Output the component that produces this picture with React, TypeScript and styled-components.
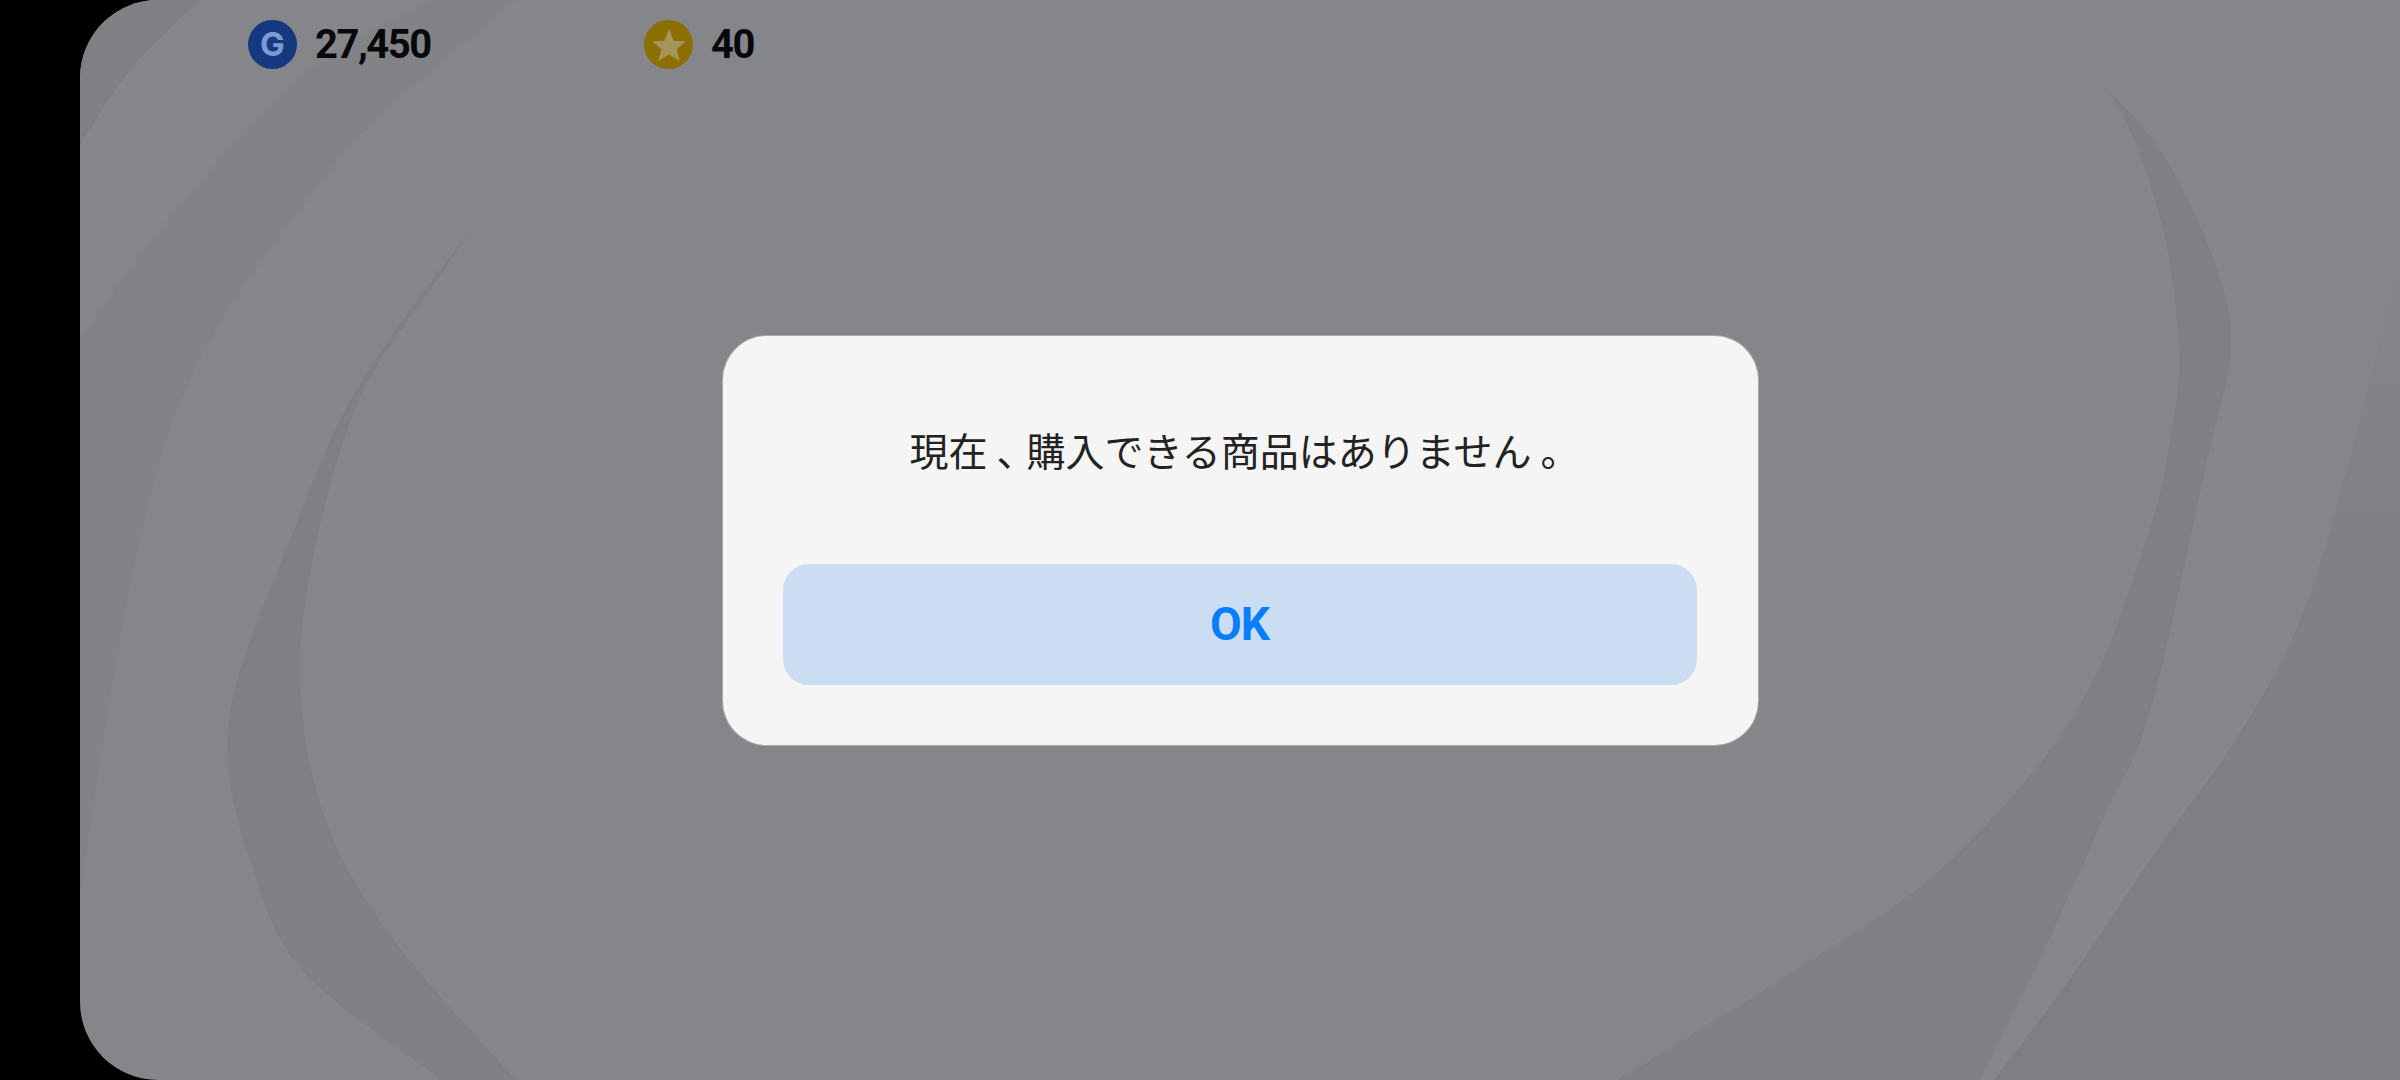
import React from "react";
import styled, { createGlobalStyle } from "styled-components";

const GlobalStyle = createGlobalStyle`
  html, body {
    margin: 0;
    padding: 0;
    width: 2400px;
    height: 1080px;
    overflow: hidden;
    background: #000000;
  }
`;

const Screen = styled.div`
  position: relative;
  width: 2320px;
  height: 1080px;
  margin-left: 80px;
  border-radius: 78px 0 0 78px;
  overflow: hidden;
  background: #85868a;
`;

const Backdrop = styled.svg`
  position: absolute;
  top: 0;
  left: 0;
  width: 2320px;
  height: 1080px;
`;

const CoinBar = styled.div`
  position: relative;
  display: flex;
  padding: 20px 0 0 168px;
`;

const CoinItem = styled.div<{ $width: number }>`
  display: flex;
  align-items: center;
  gap: 18px;
  width: ${(p) => p.$width}px;
`;

const CoinIcon = styled.div<{ $color: string }>`
  display: flex;
  align-items: center;
  justify-content: center;
  width: 49px;
  height: 49px;
  border-radius: 50%;
  background: ${(p) => p.$color};
`;

const CoinLetter = styled.span`
  font-family: "Inter", "Liberation Sans", sans-serif;
  font-weight: 700;
  font-size: 33px;
  line-height: 1;
  color: #7b9bd2;
`;

const CoinAmount = styled.span`
  font-family: "Roboto", "Liberation Sans", sans-serif;
  font-weight: 700;
  font-size: 40px;
  line-height: 49px;
  letter-spacing: -1.5px;
  color: #08080a;
`;

const Overlay = styled.div`
  position: absolute;
  top: 0;
  left: 0;
  right: 0;
  bottom: 0;
  display: flex;
  align-items: center;
  justify-content: center;
`;

const Dialog = styled.div`
  display: flex;
  flex-direction: column;
  box-sizing: border-box;
  width: 1035px;
  height: 409px;
  padding: 0 60px 60px;
  background: #f5f5f5;
  border-radius: 44px;
  box-shadow: 0 0 0 1px #a9a9ab;
`;

const Message = styled.div`
  flex: 1;
  display: flex;
  align-items: center;
  justify-content: center;
  font-family: "Noto Sans CJK JP", "Liberation Sans", sans-serif;
  font-weight: 400;
  font-size: 39px;
  line-height: 1.2;
  white-space: nowrap;
  color: #222222;
`;

const Punct = styled.span`
  padding-left: 9px;
  letter-spacing: -9px;
`;

const OkButton = styled.button`
  width: 914px;
  height: 121px;
  padding: 0;
  border: none;
  border-radius: 26px;
  background: #cbddf2;
  font-family: "Roboto", "Liberation Sans", sans-serif;
  font-weight: 700;
  font-size: 46px;
  letter-spacing: -1px;
  color: #0a7dfa;
`;

type Point = [number, number];

// Catmull-Rom through traced points, page coordinates. Each segment is smoothed on
// its own, and segments are joined by straight lines so corners stay off-canvas.
const curve = (points: Point[]) => {
  let d = `${points[0][0]} ${points[0][1]}`;
  for (let i = 0; i < points.length - 1; i++) {
    const p0 = points[Math.max(i - 1, 0)];
    const p1 = points[i];
    const p2 = points[i + 1];
    const p3 = points[Math.min(i + 2, points.length - 1)];
    const c1x = p1[0] + (p2[0] - p0[0]) / 6;
    const c1y = p1[1] + (p2[1] - p0[1]) / 6;
    const c2x = p2[0] - (p3[0] - p1[0]) / 6;
    const c2y = p2[1] - (p3[1] - p1[1]) / 6;
    d += ` C${c1x} ${c1y} ${c2x} ${c2y} ${p2[0]} ${p2[1]}`;
  }
  return d;
};

const shape = (...segments: Point[][]) =>
  `M${segments.map(curve).join(" L")} Z`;

const blobLeft: Point[] = [
  [516, 1080],
  [391, 936],
  [324, 815],
  [300, 678],
  [317, 540],
  [361, 396],
  [428, 293],
  [494, 207],
  [598, 120],
  [672, 69],
  [783, 0],
  [810, -20],
];

const blobRight: Point[] = [
  [1990, -20],
  [2009, 0],
  [2105, 86],
  [2157, 207],
  [2179, 344],
  [2170, 440],
  [2146, 540],
  [2076, 712],
  [1943, 867],
  [1795, 970],
  [1617, 1080],
  [1590, 1100],
];

const bandLeft: Point[] = [
  [442, 1080],
  [302, 970],
  [250, 860],
  [228, 760],
  [240, 670],
  [290, 540],
  [345, 410],
  [428, 285],
  [494, 207],
];

const bandRight: Point[] = [
  [2105, 86],
  [2160, 150],
  [2210, 250],
  [2231, 344],
  [2205, 470],
  [2150, 712],
  [2105, 815],
  [2035, 970],
  [1980, 1080],
];

const outerEdge: Point[] = [
  [2400, 250],
  [2379, 344],
  [2327, 540],
  [2290, 643],
  [2231, 747],
  [2157, 850],
  [2076, 970],
  [1994, 1080],
];

const streakOuter: Point[] = [
  [80, 340],
  [160, 230],
  [300, 77],
  [430, 0],
];

const streakInner: Point[] = [
  [516, 0],
  [376, 120],
  [302, 207],
  [228, 310],
  [176, 413],
  [140, 540],
  [110, 700],
  [80, 900],
];

const cornerEdge: Point[] = [
  [80, 145],
  [130, 70],
  [200, 0],
];

const App: React.FC = () => {
  return (
    <>
      <GlobalStyle />
      <Screen>
        <Backdrop viewBox="80 0 2320 1080">
          <defs>
            <linearGradient id="outerFade" x1="0" y1="1" x2="0" y2="0">
              <stop offset="0" stopColor="#7e7f83" />
              <stop offset="0.55" stopColor="#807f83" />
              <stop offset="1" stopColor="#85868a" />
            </linearGradient>
          </defs>
          <path d={shape(cornerEdge, [[80, 0]])} fill="#7f8083" />
          <path d={shape(streakOuter, streakInner)} fill="#828387" />
          <path d={shape(outerEdge, [[2400, 1080]])} fill="url(#outerFade)" />
          <path
            d={shape(bandLeft, blobLeft.slice(0, 8).reverse())}
            fill="#7f8084"
          />
          <path
            d={shape(bandRight, blobRight.slice(2, 11).reverse())}
            fill="#7f8084"
          />
          <path d={shape(blobLeft, blobRight)} fill="#85868a" />
        </Backdrop>
        <CoinBar>
          <CoinItem $width={396}>
            <CoinIcon $color="#14397e">
              <CoinLetter>G</CoinLetter>
            </CoinIcon>
            <CoinAmount>27,450</CoinAmount>
          </CoinItem>
          <CoinItem $width={200}>
            <CoinIcon $color="#8b6f00">
              <svg width="36" height="34" viewBox="0 0 38 36">
                <polygon
                  points="19,1 24,13.5 37,14 27,22.5 30.5,35 19,28 7.5,35 11,22.5 1,14 14,13.5"
                  fill="#a4965a"
                />
              </svg>
            </CoinIcon>
            <CoinAmount>40</CoinAmount>
          </CoinItem>
        </CoinBar>
        <Overlay>
          <Dialog>
            <Message>
              <span>
                現在<Punct>、</Punct>購入できる商品はありません<Punct>。</Punct>
              </span>
            </Message>
            <OkButton>OK</OkButton>
          </Dialog>
        </Overlay>
      </Screen>
    </>
  );
};

export default App;
